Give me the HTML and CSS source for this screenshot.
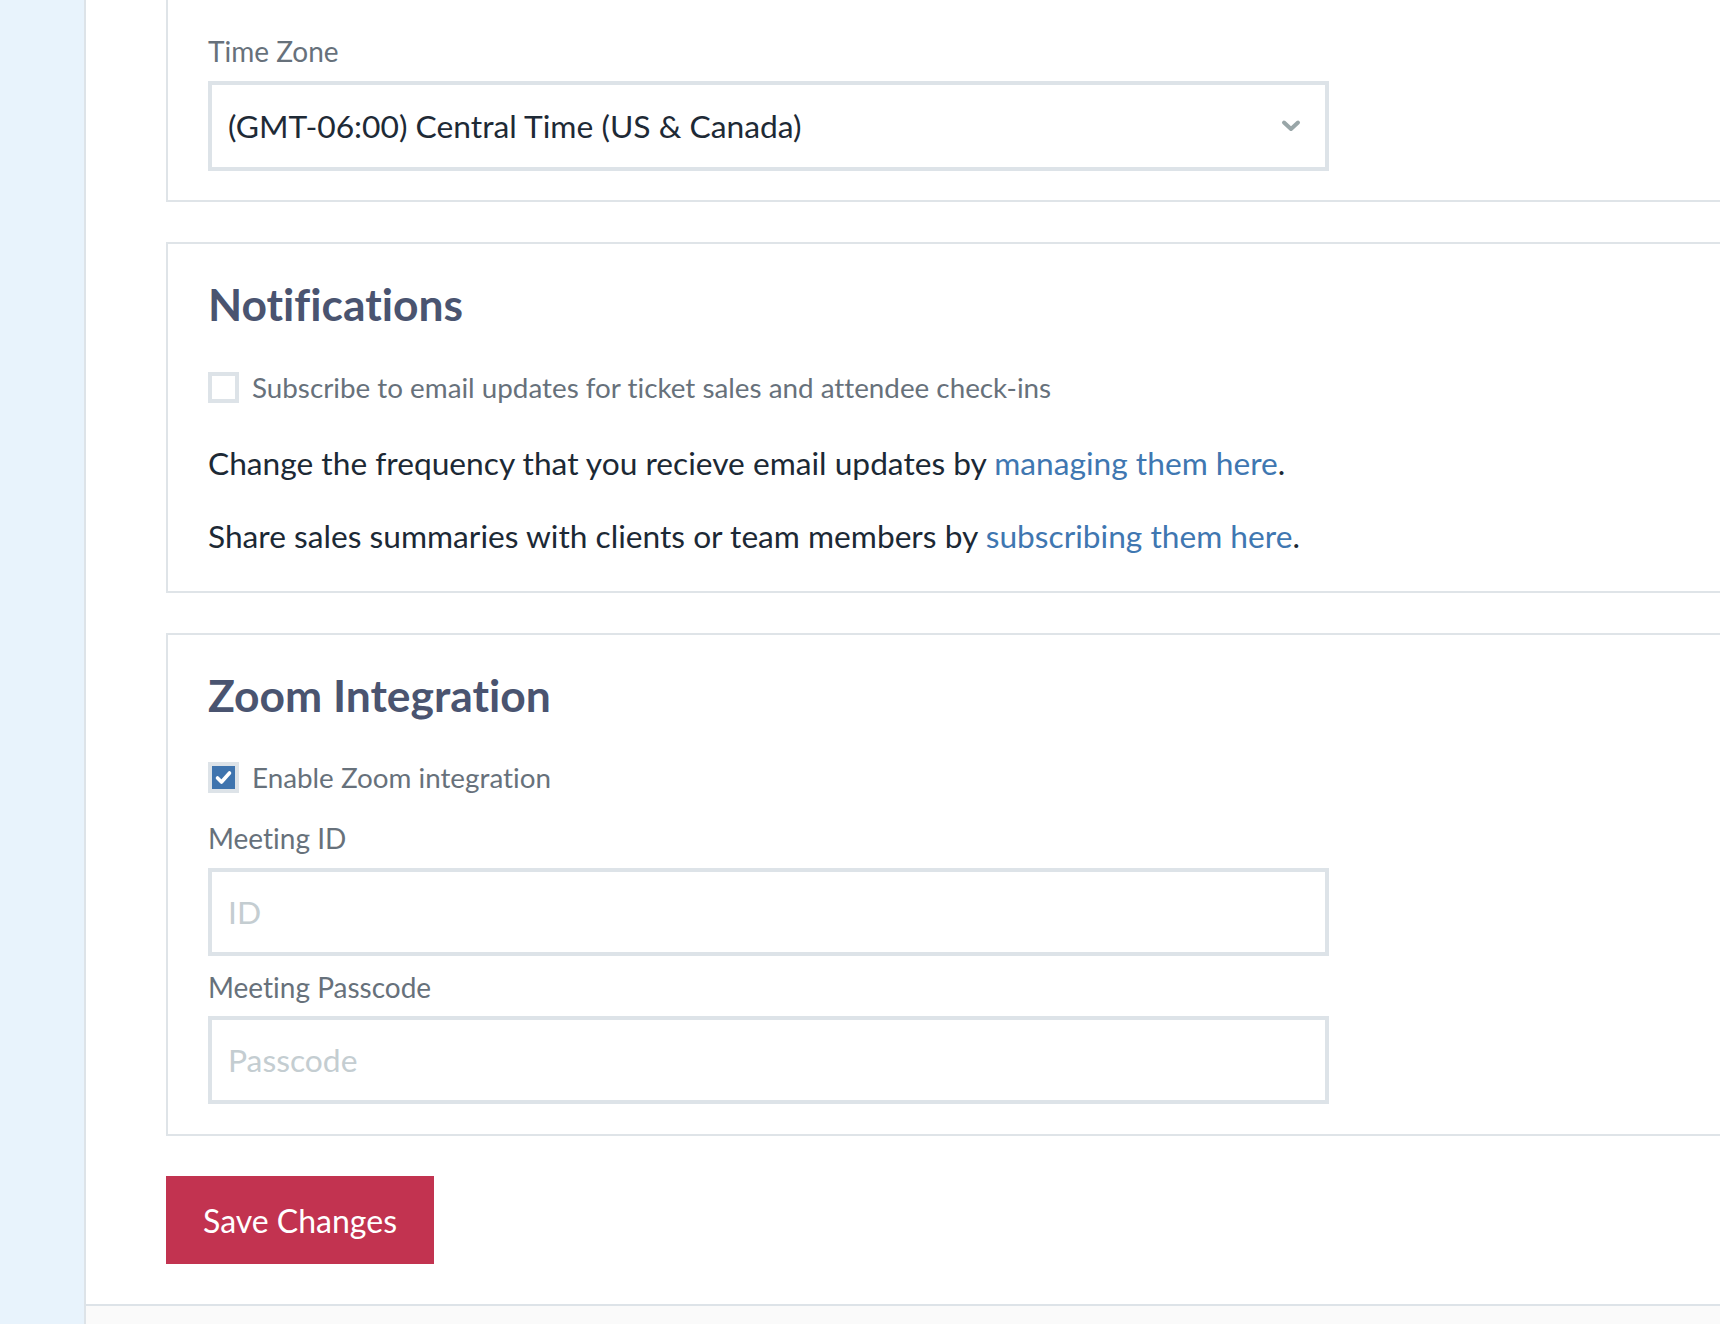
FILE: index.html
```html
<!DOCTYPE html>
<html lang="en">
<head>
<meta charset="utf-8">
<title>Settings</title>
<link rel="stylesheet" href="styles.css">
</head>
<body>
<div class="page">
  <aside class="sidebar"></aside>
  <main class="main">
    <div class="content">
      <section class="card card-first">
        <div class="field">
          <label class="label">Time Zone</label>
          <div class="select">
            <span class="select-value">(GMT-06:00) Central Time (US &amp; Canada)</span>
            <svg class="chevron" width="20" height="14" viewBox="0 0 20 14"><path d="M3 3.5 L10 10 L17 3.5" fill="none" stroke="#99a6a8" stroke-width="4" stroke-linecap="round" stroke-linejoin="round"/></svg>
          </div>
        </div>
      </section>

      <section class="card card-notify">
        <h2 class="card-title">Notifications</h2>
        <div class="check-row">
          <span class="checkbox"></span>
          <span class="check-text">Subscribe to email updates for ticket sales and attendee check-ins</span>
        </div>
        <p class="para para-first">Change the frequency that you recieve email updates by <a href="#" class="link">managing them here</a>.</p>
        <p class="para">Share sales summaries with clients or team members by <a href="#" class="link">subscribing them here</a>.</p>
      </section>

      <section class="card card-zoom">
        <h2 class="card-title">Zoom Integration</h2>
        <div class="check-row">
          <span class="checkbox checked"><svg width="21" height="21" viewBox="0 0 21 21"><path d="M4.5 11 L8.5 15 L16.5 6" fill="none" stroke="#ffffff" stroke-width="3.6" stroke-linecap="round" stroke-linejoin="round"/></svg></span>
          <span class="check-text">Enable Zoom integration</span>
        </div>
        <div class="field field-gap">
          <label class="label">Meeting ID</label>
          <div class="input"><span class="placeholder">ID</span></div>
        </div>
        <div class="field field-gap-sm">
          <label class="label">Meeting Passcode</label>
          <div class="input"><span class="placeholder">Passcode</span></div>
        </div>
      </section>

      <div class="actions">
        <button class="btn-save" type="button">Save Changes</button>
      </div>
    </div>
    <footer class="footer"></footer>
  </main>
</div>
</body>
</html>
```

FILE: styles.css
```css
* { box-sizing: border-box; }

html, body {
  margin: 0;
  padding: 0;
  height: 100%;
  overflow: hidden;
  background: #ffffff;
  font-family: "Lato", "Open Sans", sans-serif;
  font-feature-settings: "liga" 0;
  font-variant-ligatures: no-common-ligatures;
}

.page {
  display: flex;
  min-height: 100vh;
}

.sidebar {
  width: 86px;
  flex: 0 0 86px;
  background: #e8f3fc;
  border-right: 2px solid #dde3e8;
}

.main {
  flex: 1;
  display: flex;
  flex-direction: column;
  overflow: hidden;
}

.content {
  padding-left: 80px;
  margin-top: -2px;
}

.card {
  border: 2px solid #dfe4e8;
  border-right: none;
  margin-right: -10px;
  padding: 35px 40px 35px 40px;
  margin-bottom: 40px;
}

.card-first {
  padding-top: 35px;
  padding-bottom: 29px;
}

.card-notify {
  padding-top: 33px;
  padding-bottom: 36px;
}

.card-zoom {
  padding-bottom: 30px;
  margin-bottom: 38px;
}

.field {
  width: 1121px;
}

.label {
  display: block;
  font-size: 28px;
  line-height: 1.2;
  color: #67717b;
  margin-bottom: 12px;
}

.select {
  height: 90px;
  border: 4px solid #dde3e8;
  display: flex;
  align-items: center;
  justify-content: space-between;
  padding: 0 24px 0 16px;
  background: #fff;
}

.select-value {
  font-size: 31.8px;
  color: #1e2a36;
}

.chevron {
  display: block;
}

.card-title {
  margin: 0 0 42px 0;
  font-size: 44.4px;
  line-height: 1.2;
  font-weight: 700;
  color: #4a5470;
}

.card-zoom .card-title {
  margin-top: -2px;
  margin-bottom: 41px;
}

.check-row {
  display: flex;
  align-items: center;
  gap: 13px;
  height: 31px;
}

.checkbox {
  width: 31px;
  height: 31px;
  border: 4px solid #dde3e8;
  background: #fff;
  display: flex;
  align-items: center;
  justify-content: center;
}

.checkbox.checked {
  background: #3f74ae;
}

.checkbox svg { display: block; }

.check-text {
  font-size: 27.8px;
  line-height: 1.2;
  color: #67717b;
}

.para {
  margin: 35px 0 0 0;
  font-size: 31.7px;
  line-height: 1.2;
  color: #1c2935;
}

.para-first {
  margin-top: 41px;
}

.link {
  color: #3f77b1;
  text-decoration: none;
}

.field-gap { margin-top: 29px; }
.field-gap-sm { margin-top: 15px; }

.input {
  height: 88px;
  border: 4px solid #dde3e8;
  display: flex;
  align-items: center;
  padding: 0 16px;
  background: #fff;
}

.placeholder {
  font-size: 31.8px;
  color: #c4cdd1;
}

.actions {
  padding-top: 2px;
  padding-bottom: 40px;
}

.btn-save {
  display: block;
  width: 268px;
  height: 88px;
  border: none;
  background: #c23350;
  color: #ffffff;
  font-family: "Lato", "Open Sans", sans-serif;
  font-size: 32px;
  padding: 0;
  cursor: pointer;
}

.footer {
  flex: 1;
  border-top: 2px solid #dde3e8;
  background: #fafafa;
}
```
